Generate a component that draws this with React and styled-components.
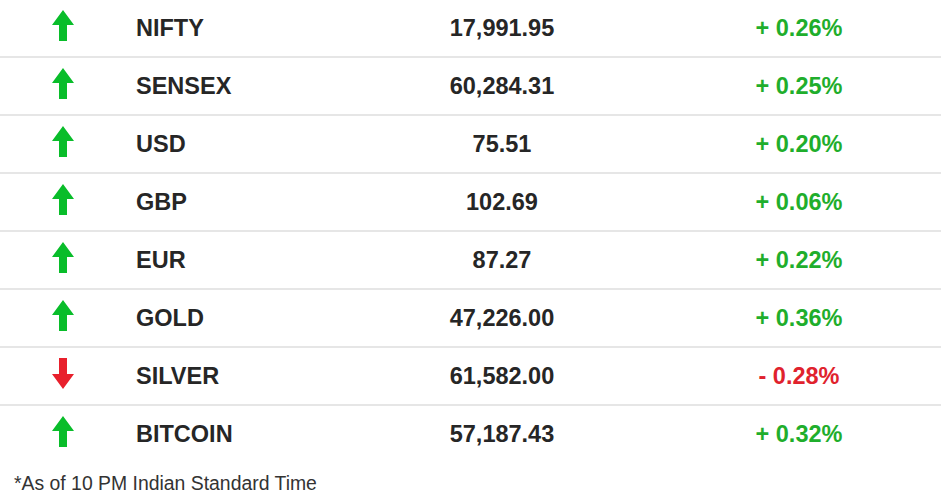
import styled, { createGlobalStyle } from "styled-components"

const GlobalStyle = createGlobalStyle`
    body {
        margin: 0;
        background: #ffffff;
        font-family: "Liberation Sans", Arial, sans-serif;
    }
`

const rates = [
    { name: "NIFTY", value: "17,991.95", change: "+ 0.26%", up: true },
    { name: "SENSEX", value: "60,284.31", change: "+ 0.25%", up: true },
    { name: "USD", value: "75.51", change: "+ 0.20%", up: true },
    { name: "GBP", value: "102.69", change: "+ 0.06%", up: true },
    { name: "EUR", value: "87.27", change: "+ 0.22%", up: true },
    { name: "GOLD", value: "47,226.00", change: "+ 0.36%", up: true },
    { name: "SILVER", value: "61,582.00", change: "- 0.28%", up: false },
    { name: "BITCOIN", value: "57,187.43", change: "+ 0.32%", up: true },
]

const Arrow = ({ up }) => (
    <svg width="22" height="31" viewBox="0 0 22 31">
        {up ? (
            <path d="M11 0 L22 15 L15 15 L15 31 L7 31 L7 15 L0 15 Z" fill="#09bd2a" />
        ) : (
            <path d="M7 0 L15 0 L15 16 L22 16 L11 31 L0 16 L7 16 Z" fill="#e8202c" />
        )}
    </svg>
)

const App = () => {

    return (
        <Wrapper>
            <GlobalStyle />

            <Table>
                {rates.map((r) => (
                    <Row key={r.name}>
                        <Icon><Arrow up={r.up} /></Icon>
                        <Name>{r.name}</Name>
                        <Value>{r.value}</Value>
                        <Change $up={r.up}>{r.change}</Change>
                    </Row>
                ))}
            </Table>

            <Note>*As of 10 PM Indian Standard Time</Note>
        </Wrapper>
    )
}

export default App;

const Wrapper = styled.div`
    width: 941px;
    height: 498px;
    overflow: hidden;
`

const Table = styled.div`
    margin-top: 0;
`

const Row = styled.div`
    display: grid;
    grid-template-columns: 126px 250px 252px 1fr;
    align-items: center;
    height: 56px;
    border-bottom: 2px solid #e6e6e6;
    font-size: 23.5px;
    font-weight: 700;
    color: #262626;

    &:last-child {
        border-bottom: none;
    }
`

const Icon = styled.div`
    display: flex;
    justify-content: center;
    padding-bottom: 5px;
`

const Name = styled.div`
    padding-left: 10px;
`

const Value = styled.div`
    text-align: center;
`

const Change = styled.div`
    padding-left: 29px;
    text-align: center;
    color: ${(p) => (p.$up ? "#1fae2c" : "#e0222d")};
`

const Note = styled.p`
    margin: 10px 0 0 14px;
    font-size: 19.4px;
    color: #333333;
`
